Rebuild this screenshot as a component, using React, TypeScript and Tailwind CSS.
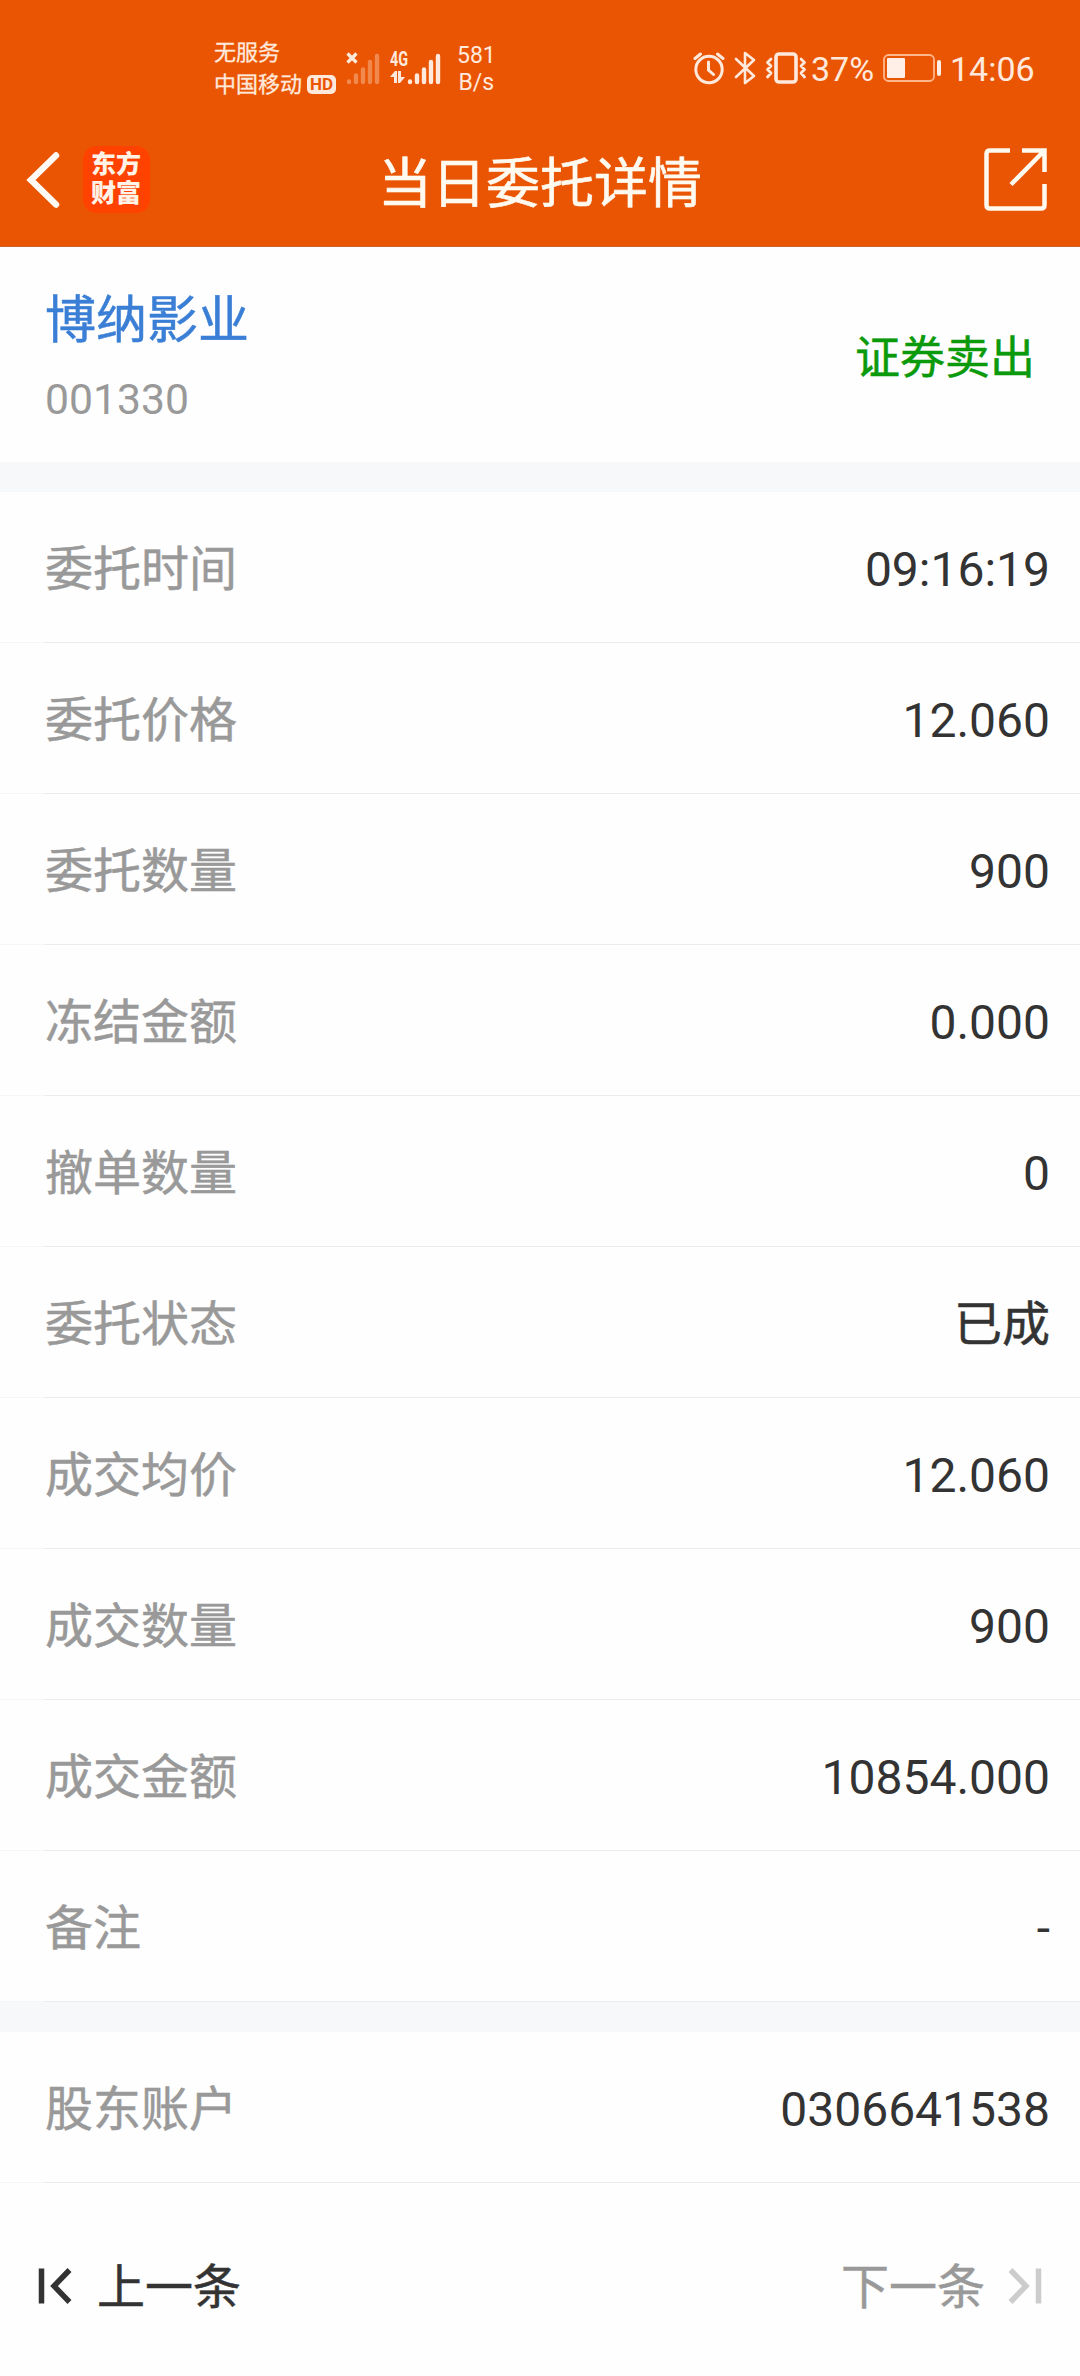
import React from "react";

const orders: [string, string][] = [
  ["委托时间", "09:16:19"],
  ["委托价格", "12.060"],
  ["委托数量", "900"],
  ["冻结金额", "0.000"],
  ["撤单数量", "0"],
  ["委托状态", "已成"],
  ["成交均价", "12.060"],
  ["成交数量", "900"],
  ["成交金额", "10854.000"],
  ["备注", "-"],
];

function Row({ label, value }: { label: string; value: string }) {
  return (
    <div className="h-[151px] shrink-0 flex flex-col">
      <div className="flex-1 flex items-center justify-between pt-[5px] pl-[45px] pr-[30px] text-[48px] leading-none">
        <span className="text-[#999999] mt-[1px] [-webkit-text-stroke:0.5px_#999999]">{label}</span>
        <span className={value === "已成" ? "text-[#333333] mt-[1px] [-webkit-text-stroke:0.5px_#333333]" : "text-[#333333]"}>{value}</span>
      </div>
      <div className="flex h-px">
        <div className="w-[45px] bg-[#f6f6f6]" />
        <div className="flex-1 bg-[#ebebeb]" />
      </div>
    </div>
  );
}

function SignalBars({ className }: { className: string }) {
  return (
    <svg width="34" height="34" viewBox="0 0 34 34" className={className} stroke="currentColor" strokeWidth="4.4" strokeLinecap="round">
      <path d="M3 30.5V31M10 24.5V31M17 18.5V31M24 11V31M31 5V31" />
    </svg>
  );
}

function StatusBar() {
  return (
    <div className="h-[116px] flex items-start justify-between pl-[214px] pr-[47px] text-[#ffe9dc]">
      <div className="flex items-start">
        <div className="pt-[37px] text-[22px] leading-[32px] w-[88px] whitespace-nowrap [-webkit-text-stroke:0.3px_#ffe9dc]">
          <div>无服务</div>
          <div>中国移动</div>
        </div>
        <div className="mt-[75px] ml-[5px] w-[29px] h-[19px] rounded-[5px] bg-[#ffe9dc] text-[#ea5504] text-[17px] font-bold leading-[19px] text-center">
          HD
        </div>
        <div className="relative mt-[51px] ml-[10px] w-[34px] h-[34px]">
          <SignalBars className="opacity-35" />
          <svg width="12" height="12" viewBox="0 0 12 12" className="absolute left-0 top-[1px]" stroke="currentColor" strokeWidth="3.2">
            <path d="M1.5 1.5L10.5 10.5M10.5 1.5L1.5 10.5" />
          </svg>
        </div>
        <div className="relative mt-[51px] ml-[27px] w-[34px] h-[34px]">
          <SignalBars className="" />
          <span className="absolute left-[-17px] top-0 text-[20px] leading-[17px] font-bold origin-left scale-x-[0.72]">4G</span>
          <svg width="16" height="13" viewBox="0 0 16 13" className="absolute left-[-17px] top-[20px]" fill="currentColor">
            <path d="M0 6L5 0H7V12H4V6ZM8 0H11V6H15L10 12H8Z" />
          </svg>
        </div>
        <div className="mt-[42px] ml-[16px] text-[23px] leading-[27px] text-center">
          <div>581</div>
          <div>B/s</div>
        </div>
      </div>
      <div className="flex items-center mt-[47px] h-[42px]">
        <svg width="32" height="34" viewBox="0 0 32 34" fill="none" stroke="currentColor" strokeWidth="3" strokeLinecap="round">
          <circle cx="16" cy="18.500" r="13.200" />
          <path d="M15.500 11V19L20.500 23.500M2 7.500L7.500 3M30 7.500L24.500 3" />
        </svg>
        <svg width="22" height="34" viewBox="0 0 22 34" className="ml-[9px]" fill="none" stroke="currentColor" strokeWidth="2.600" strokeLinejoin="round" strokeLinecap="round">
          <path d="M2 8L20 25L11 32V2L20 9L2 26" />
        </svg>
        <svg width="42" height="34" viewBox="0 0 42 34" className="ml-[9px]" fill="none" stroke="currentColor" strokeWidth="3.600" strokeLinejoin="round" strokeLinecap="round">
          <rect x="11" y="3" width="20" height="28" rx="3" />
          <path d="M6 8L2.500 11.500L6 15L2.500 18.500L6 22L2.500 26M36 8L39.500 11.500L36 15L39.500 18.500L36 22L39.500 26" strokeWidth="2.800" />
        </svg>
        <span className="ml-[4px] mt-[2px] w-[63px] text-[34px] leading-none">37%</span>
        <svg width="59" height="30" viewBox="0 0 59 30" className="ml-[9px]" fill="none">
          <rect x="1" y="2" width="50" height="26" rx="4.500" stroke="#ffb68c" strokeWidth="1.800" />
          <rect x="4" y="5" width="18" height="20" rx="1" fill="#ffefe6" />
          <rect x="54" y="7" width="4" height="16" rx="2" fill="#ffefe6" />
        </svg>
        <span className="ml-[8px] mt-[2px] w-[83px] text-[34px] leading-none">14:06</span>
      </div>
    </div>
  );
}

export default function App() {
  return (
    <div className="w-[1080px] h-[2376px] flex flex-col bg-[#fefefe] overflow-hidden font-['Roboto','Noto_Sans_CJK_SC',sans-serif]">
      <header className="h-[247px] shrink-0 bg-[#ea5504] border-b border-[#c8622c]">
        <StatusBar />
        <div className="h-[130px] grid grid-cols-[1fr_auto_1fr] items-center">
          <div className="flex items-center pl-[26px] gap-[23px]">
            <svg width="34" height="56" viewBox="0 0 34 56" fill="none" stroke="#fffaf3" strokeWidth="6.500" strokeLinecap="round" className="mt-[-3px]">
              <path d="M30 3.500L5 28L30 52.500" strokeLinejoin="miter" />
            </svg>
            <div className="w-[67px] h-[67px] mt-[-4px] rounded-[14px] bg-[#ff4200] text-[#fff3e8] text-[25px] leading-[29px] font-black pl-[8px] pt-[4px] whitespace-nowrap">
              <div>东方</div>
              <div>财富</div>
            </div>
          </div>
          <h1 className="mt-[8px] text-[54px] leading-none font-normal text-[#fffaf0] [-webkit-text-stroke:0.6px_#fffaf0]">当日委托详情</h1>
          <div className="flex justify-end pr-[32px]">
            <svg width="64" height="64" viewBox="0 0 64 64" fill="none" stroke="#fffaf0" strokeWidth="4.500" className="mt-[-3px]">
              <path d="M26 2.500H6Q2.500 2.500 2.500 6V57Q2.500 60.500 6 60.500H57Q60.500 60.500 60.500 57V36M38 2.500H60.500V24M60 3L27 36.500" />
            </svg>
          </div>
        </div>
      </header>

      <section className="h-[215px] shrink-0 flex items-center justify-between px-[45px]">
        <div className="pt-[10px]">
          <div className="text-[51px] leading-[60px] text-[#3a7fd5] [-webkit-text-stroke:0.5px_#3a7fd5]">博纳影业</div>
          <div className="mt-[18px] text-[42.700px] leading-[60px] text-[#999999]">001330</div>
        </div>
        <div className="pt-[7px] text-[45px] leading-none text-[#0b9a0b] [-webkit-text-stroke:0.5px_#0b9a0b]">证券卖出</div>
      </section>

      <div className="h-[30px] shrink-0 bg-[#f6f8fa]" />
      {orders.map(([label, value]) => (
        <Row key={label} label={label} value={value} />
      ))}
      <div className="h-[30px] shrink-0 bg-[#f6f8fa]" />
      <Row label="股东账户" value="0306641538" />

      <footer className="flex-1 flex items-center justify-between pl-[38px] pr-[38px] pt-[12px] text-[48px] leading-none">
        <div className="flex items-center gap-[24px] text-[#333333]">
          <svg width="35" height="36" viewBox="0 0 35 36" fill="none" stroke="currentColor" strokeWidth="5.500">
            <path d="M3.500 0.500V35.500M31.500 2L16 18L31.500 34" />
          </svg>
          <span className="pt-[5px] [-webkit-text-stroke:0.5px_#333333]">上一条</span>
        </div>
        <div className="flex items-center gap-[22px] text-[#999999]">
          <span className="pt-[5px] [-webkit-text-stroke:0.5px_#999999]">下一条</span>
          <svg width="35" height="36" viewBox="0 0 35 36" fill="none" stroke="#cccccc" strokeWidth="5.500">
            <path d="M31.500 0.500V35.500M3.500 2L19 18L3.500 34" />
          </svg>
        </div>
      </footer>
    </div>
  );
}
